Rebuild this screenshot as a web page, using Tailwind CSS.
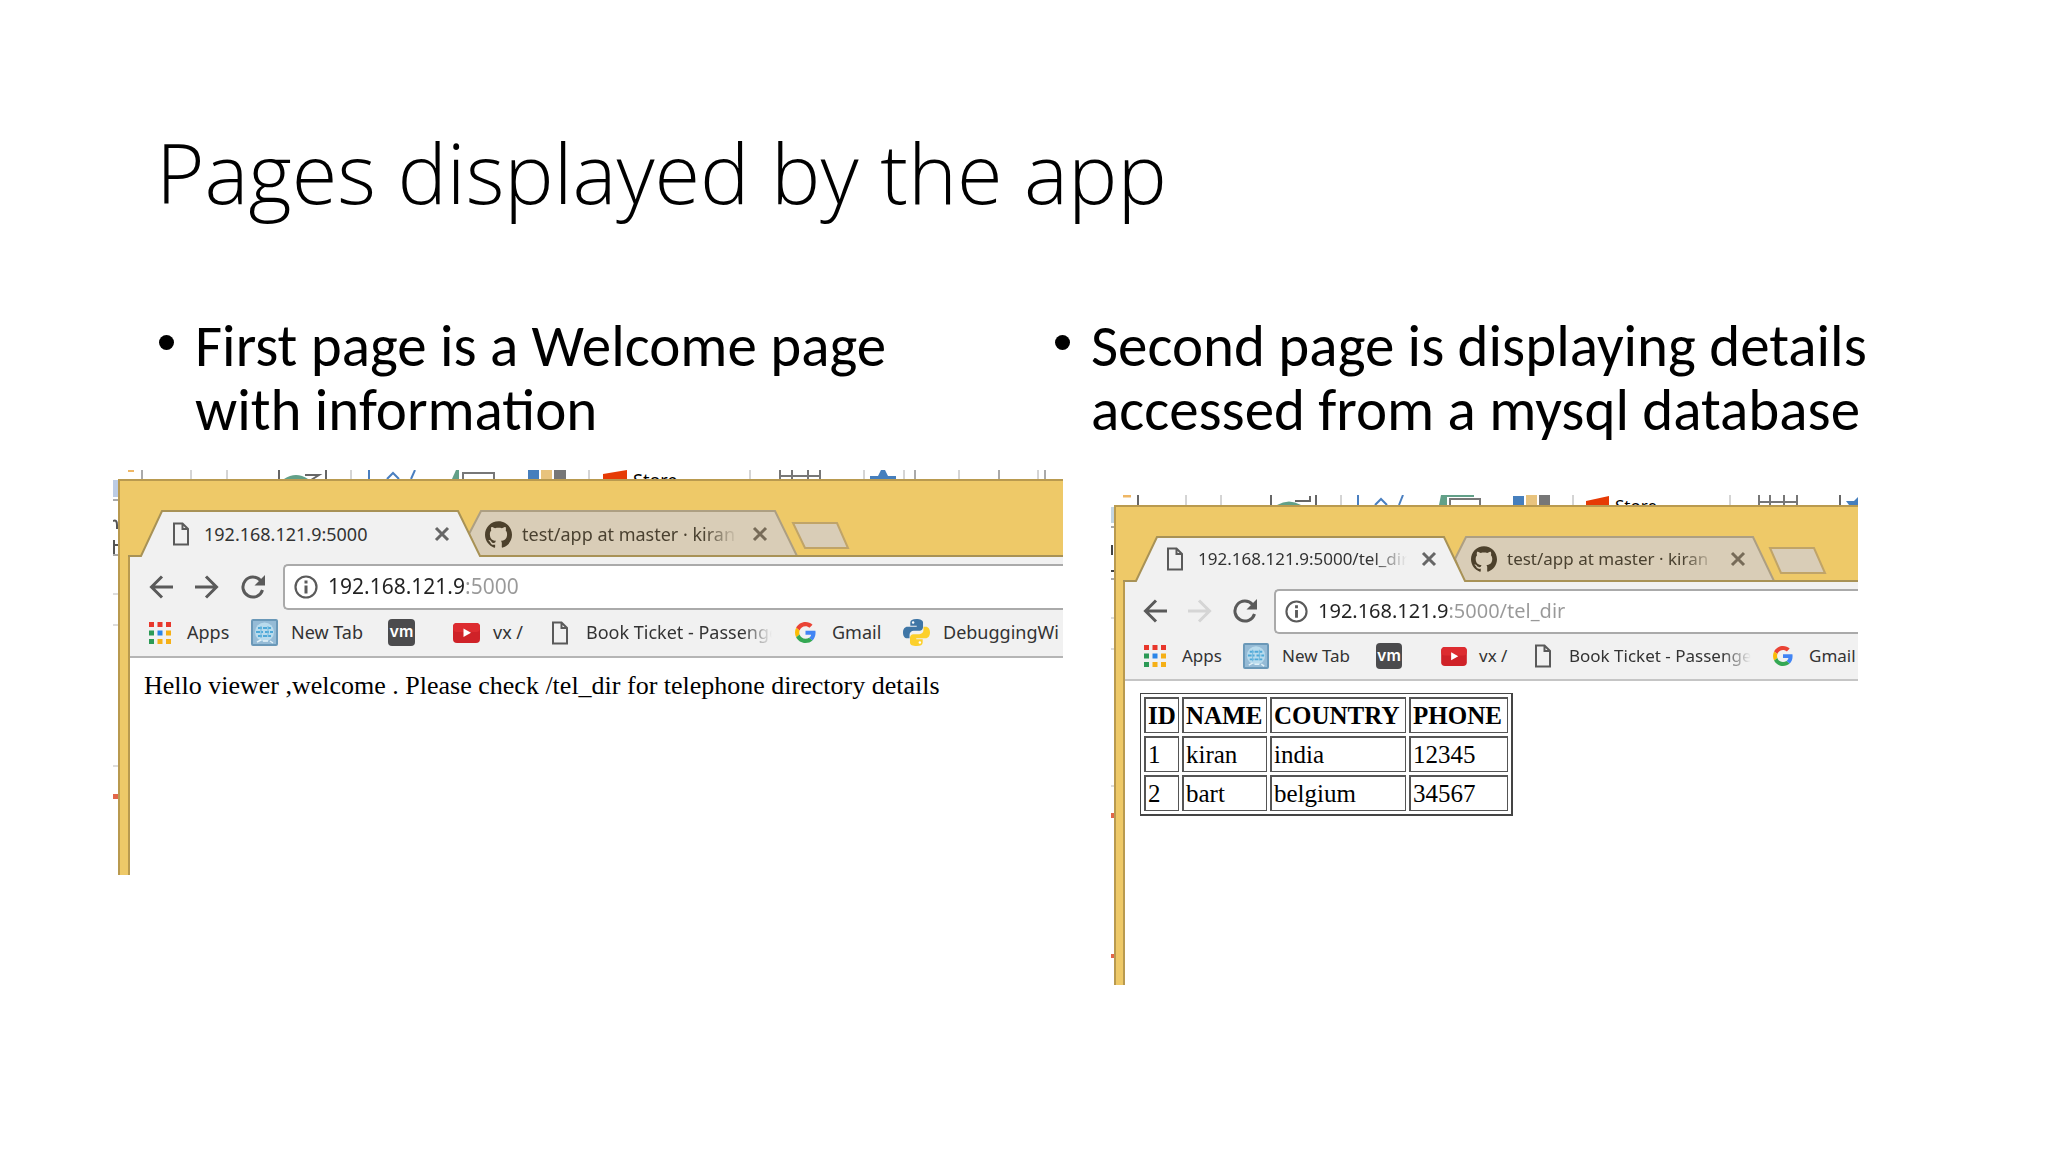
<!DOCTYPE html>
<html lang="en">
<head>
    <meta charset="UTF-8">
    <meta name="viewport" content="width=device-width, initial-scale=1.0">
    <title>Pages displayed by the app</title>
    <script src="https://cdn.jsdelivr.net/npm/@tailwindcss/browser@4"></script>
</head>
<body class="bg-white min-h-screen text-black font-['Carlito','Lato',sans-serif]">

    <!-- Shared icons -->
    <svg class="hidden" aria-hidden="true">
        <symbol id="page" viewBox="0 0 18 24">
            <path d="M2 1.500h8.500L16 7v15.500H2z M10.500 1.500V7H16" fill="none" stroke="#5a5a5a" stroke-width="2"/>
        </symbol>
        <symbol id="close" viewBox="0 0 16 16">
            <path d="M2 2l12 12M14 2L2 14" stroke="currentColor" stroke-width="3" fill="none"/>
        </symbol>
        <symbol id="back" viewBox="0 0 24 24">
            <path d="M13 1.500L2.500 12L13 22.500M2.500 12H24" fill="none" stroke="currentColor" stroke-width="3"/>
        </symbol>
        <symbol id="forward" viewBox="0 0 24 24">
            <path d="M11 1.500L21.500 12L11 22.500M21.500 12H0" fill="none" stroke="currentColor" stroke-width="3"/>
        </symbol>
        <symbol id="reload" viewBox="0 0 24 24">
            <path d="M19.500 5.500A10 10 0 1 0 21.500 15" fill="none" stroke="#5a5a5a" stroke-width="3"/>
            <path d="M24 0v10.500H13.500z" fill="#5a5a5a"/>
        </symbol>
        <symbol id="info" viewBox="0 0 24 24">
            <circle cx="12" cy="12" r="10.500" fill="none" stroke="#5a5a5a" stroke-width="2.200"/>
            <path d="M10.500 5.500h3v3h-3zM10.500 10.500h3v8h-3z" fill="#5a5a5a"/>
        </symbol>
        <symbol id="apps" viewBox="0 0 22 22">
            <path d="M0 0h5v5H0zM8.500 0h5v5h-5zM17 0h5v5h-5z" fill="#e8372c"/>
            <path d="M0 8.500h5v5H0zM0 17h5v5H0z" fill="#2c9a56"/>
            <path d="M8.500 8.500h5v5h-5z" fill="#2a85e8"/>
            <path d="M17 8.500h5v5h-5zM8.500 17h5v5h-5zM17 17h5v5h-5z" fill="#f5b017"/>
        </symbol>
        <symbol id="globe" viewBox="0 0 27 27">
            <rect x="1" y="1" width="25" height="25" rx="1" fill="#95bbd6" stroke="#6a98b8" stroke-width="2"/>
            <circle cx="13.500" cy="13" r="9.500" fill="#b9dbed"/>
            <path d="M7 9h13M5 13h7M14 13h8M7 17h13" stroke="#4fa9d8" stroke-width="2" stroke-dasharray="4 1" fill="none"/>
            <path d="M10 7v12M17 7v11" stroke="#6fb9df" stroke-width="1" fill="none"/>
            <path d="M6 23l4-2M12 22h5M19 22l3 2" stroke="#e2f1f8" stroke-width="1.500" fill="none"/>
        </symbol>
        <symbol id="youtube" viewBox="0 0 27 20">
            <rect width="27" height="20" rx="4" fill="#cf2228"/>
            <rect width="27" height="9" rx="4" fill="#dd2c30"/>
            <path d="M10.500 5.500v8.500l7.500-4.250z" fill="#fff"/>
        </symbol>
        <symbol id="github" viewBox="0 0 24 24">
            <path fill="#4d412c" d="M12 .297c-6.630 0-12 5.373-12 12 0 5.303 3.438 9.800 8.205 11.385.600.113.820-.258.820-.577 0-.285-.010-1.040-.015-2.040-3.338.724-4.042-1.610-4.042-1.610C4.422 18.070 3.633 17.700 3.633 17.700c-1.087-.744.084-.729.084-.729 1.205.084 1.838 1.236 1.838 1.236 1.070 1.835 2.809 1.305 3.495.998.108-.776.417-1.305.760-1.605-2.665-.300-5.466-1.332-5.466-5.930 0-1.310.465-2.380 1.235-3.220-.135-.303-.540-1.523.105-3.176 0 0 1.005-.322 3.300 1.230.960-.267 1.980-.399 3-.405 1.020.006 2.040.138 3 .405 2.280-1.552 3.285-1.230 3.285-1.230.645 1.653.240 2.873.120 3.176.765.840 1.230 1.910 1.230 3.220 0 4.610-2.805 5.625-5.475 5.920.420.360.810 1.096.810 2.220 0 1.606-.015 2.896-.015 3.286 0 .315.210.690.825.570C20.565 22.092 24 17.592 24 12.297c0-6.627-5.373-12-12-12"/>
        </symbol>
        <symbol id="google" viewBox="0 0 48 48">
            <path fill="#EA4335" d="M24 9.500c3.540 0 6.710 1.220 9.210 3.600l6.850-6.850C35.900 2.380 30.470 0 24 0 14.620 0 6.510 5.380 2.560 13.220l7.980 6.190C12.430 13.720 17.740 9.500 24 9.500z"/>
            <path fill="#4285F4" d="M46.980 24.550c0-1.570-.150-3.090-.380-4.550H24v9.020h12.940c-.580 2.960-2.260 5.480-4.780 7.180l7.730 6c4.510-4.180 7.090-10.360 7.090-17.650z"/>
            <path fill="#FBBC05" d="M10.530 28.590c-.480-1.450-.760-2.990-.760-4.590s.270-3.140.760-4.590l-7.980-6.190C.920 16.460 0 20.120 0 24c0 3.880.920 7.540 2.560 10.780l7.970-6.190z"/>
            <path fill="#34A853" d="M24 48c6.480 0 11.930-2.130 15.890-5.810l-7.730-6c-2.150 1.450-4.920 2.300-8.160 2.300-6.260 0-11.570-4.220-13.470-9.910l-7.980 6.190C6.510 42.620 14.620 48 24 48z"/>
        </symbol>
        <symbol id="python" viewBox="0 0 24 24">
            <path fill="#3f76a6" d="M11.900 0C8.400 0 6.500 1.200 6.500 3.200V6h5.700v.900H4C1.600 6.900 0 8.900 0 12s1.500 5.200 3.700 5.200h2.100v-3c0-2.100 1.700-3.700 3.700-3.700h5.300c1.700 0 3-1.400 3-3.100V3.200C17.800 1.200 15.500 0 11.900 0z"/>
            <circle cx="9" cy="3.200" r="1.100" fill="#fff"/>
            <path fill="#fcd02c" d="M12.100 24c3.500 0 5.400-1.200 5.400-3.200V18h-5.700v-.900H20c2.400 0 4-2 4-5.100s-1.500-5.200-3.700-5.200h-2.100v3c0 2.100-1.700 3.700-3.700 3.700H9.200c-1.700 0-3 1.400-3 3.100v4.200c0 2 2.300 3.200 5.900 3.200z"/>
            <circle cx="15" cy="20.800" r="1.100" fill="#fff"/>
        </symbol>
    </svg>

    <main class="pt-[124px]">
        <h1 class="pl-[156px] text-[83px] leading-[96px] font-light font-['Open_Sans',sans-serif]">Pages displayed by the app</h1>

        <div class="grid grid-cols-2 gap-[60px] pl-[159px] pr-[157px] mt-[94px] text-[59px] leading-[64px]">
            <ul>
                <li class="flex gap-[21px]">
                    <span class="mt-[21px] size-[15px] shrink-0 rounded-full bg-black"></span>
                    <span class="pr-8">First page is a Welcome page with information</span>
                </li>
            </ul>
            <ul>
                <li class="flex gap-[21px]">
                    <span class="mt-[21px] size-[15px] shrink-0 rounded-full bg-black"></span>
                    <span>Second page is displaying details accessed from a mysql database</span>
                </li>
            </ul>
        </div>

        <div class="grid grid-cols-[950fr_747fr] items-start gap-12 pl-[113px] pr-[190px] mt-[28px] font-['Noto_Sans',sans-serif]">

            <!-- Welcome page -->
            <section class="relative overflow-hidden">
                <svg class="absolute left-0 top-0 w-full h-full" aria-hidden="true">
                    <path d="M15 1h6" stroke="#efb765" stroke-width="2"/>
                    <path d="M29 0v9M802 0v9M886 0v9M932 0v9" stroke="#555" stroke-width="1"/>
                    <path d="M78 0v9M114 0v9M238 0v9M476 0v9M637 0v9M751 0v9M791 0v9M846 0v9M925 0v9" stroke="#aaa" stroke-width="1"/>
                    <path d="M171 9q12-8 24 0z" fill="#62a088"/>
                    <path d="M166 0v9M192 5h14l-8 5M213 0v9" stroke="#666" stroke-width="2" fill="none"/>
                    <path d="M256 0v9M274 9l6-6 6 6M302 0l-4 9" stroke="#4a7fc0" stroke-width="2" fill="none"/>
                    <path d="M346 0h-3l-4 9h7z" fill="#62a088"/>
                    <path d="M350 10V3h31v7" stroke="#777" stroke-width="2" fill="none"/>
                    <path d="M415 0h11v9h-11z" fill="#467fbd"/><path d="M428 0h11v9h-11z" fill="#e8c37d"/><path d="M441 0h12v9h-12z" fill="#777"/>
                    <path d="M490 9V4l24-4v9z" fill="#e63b05"/>
                    <path d="M667 0v9M679 0v9M695 0v9M707 0v9M667 6h40" stroke="#777" stroke-width="2"/>
                    <path d="M757 9v-3h8l3-6h4l3 6h8v3z" fill="#467fbd"/>
                    <path d="M0 10h5v17H0z" fill="#bccce5"/>
                    <path d="M0 30h5M0 85h5" stroke="#555" stroke-width="1"/>
                    <path d="M0 51q4-2 4 4v4M1 70v14M0 75h5" stroke="#555" stroke-width="2" fill="none"/>
                    <path d="M0 124h5M0 155h5M0 296h5" stroke="#bbb" stroke-width="1"/>
                    <path d="M0 324h5v5H0z" fill="#e2674a"/>
                </svg>
                <div class="relative h-[9px] overflow-hidden pl-[520px] text-[18px] leading-[20px] text-black">Store</div>
                <div class="relative ml-[5px] border-t-2 border-l-2 border-[#b99a4f] bg-[#eec968] pl-[8px]">
                    <div class="-ml-[10px] relative h-[76px] pt-[30px]">
                        <!-- Tab shapes -->
                        <svg class="absolute left-0 top-0 h-full w-full" aria-hidden="true">
                            <path d="M351 53L363 30H657L679 75H361z" fill="#d9cdb7" stroke="#ad9f82" stroke-width="2"/>
                            <path d="M10 78V75H23L44 30H340L362 75V78z" fill="#f1f1f1"/>
                            <path d="M10 75H23L44 30H340L362 75H2000" fill="none" stroke="#a89256" stroke-width="2"/>
                            <path d="M675 42H719L730 67H687z" fill="#d9cdb7" stroke="#c0a468" stroke-width="2"/>
                        </svg>
                        <div class="relative flex h-[46px] items-center text-[18px] leading-[24px]">
                            <div class="ml-[54px] flex w-[313px] shrink-0 items-center text-[#333]">
                                <svg class="h-6 w-[18px]"><use href="#page"/></svg>
                                <span class="ml-[14px] w-[230px]">192.168.121.9:5000</span>
                                <button aria-label="Close tab" class="text-[#666]"><svg class="size-4"><use href="#close"/></svg></button>
                            </div>
                            <div class="flex shrink-0 items-center text-[#4a4130]">
                                <svg class="size-[27px]"><use href="#github"/></svg>
                                <span class="ml-[10px] w-[216px] overflow-hidden whitespace-nowrap mask-[linear-gradient(90deg,#000_84%,transparent)]">test/app at master · kiran</span>
                                <button aria-label="Close tab" class="ml-[14px] text-[#776b58]"><svg class="size-4"><use href="#close"/></svg></button>
                            </div>
                            <button aria-label="New tab" class="ml-[25px] h-[25px] w-[54px] shrink-0"></button>
                        </div>
                    </div>
                    <div class="border-l-2 border-[#b99a4f] bg-[#f1f1f1]">
                        <div class="flex h-[54px] items-center pl-[19px] pt-[5px] text-[#5a5a5a]">
                            <button aria-label="Back" class="mr-[22px]"><svg class="size-6"><use href="#back"/></svg></button>
                            <button aria-label="Forward" class="mr-[22px]"><svg class="size-6"><use href="#forward"/></svg></button>
                            <button aria-label="Reload" class="mr-[18px]"><svg class="size-6"><use href="#reload"/></svg></button>
                            <div class="flex h-[46px] grow items-center rounded-l-[5px] border-2 border-r-0 border-[#aaa] bg-white pl-[9px]">
                                <svg class="size-6 shrink-0"><use href="#info"/></svg>
                                <input type="text" aria-label="Address" value="192.168.121.9:5000" class="ml-[10px] grow bg-[linear-gradient(90deg,#222_137px,#999_137px)] bg-clip-text text-[21px] text-transparent outline-none">
                            </div>
                        </div>
                        <nav class="flex h-[47px] items-center overflow-hidden whitespace-nowrap border-b-2 border-[#b5b5b5] pb-[2px] pl-[19px] text-[18px] text-[#333]">
                            <a href="#" class="flex w-[102px] shrink-0 items-center gap-[16px]"><svg class="size-[22px]"><use href="#apps"/></svg>Apps</a>
                            <a href="#" class="flex w-[137px] shrink-0 items-center gap-[13px]"><svg class="size-[27px]"><use href="#globe"/></svg>New Tab</a>
                            <a href="#" class="w-[65px] shrink-0"><span class="flex size-[27px] items-center justify-center rounded-[4px] bg-[#4b4b4d] pb-[3px] font-['Inter',sans-serif] text-[16px] leading-none font-semibold text-white">vm</span></a>
                            <a href="#" class="flex w-[98px] shrink-0 items-center gap-[13px]"><svg class="h-[20px] w-[27px]"><use href="#youtube"/></svg>vx /</a>
                            <a href="#" class="flex w-[244px] shrink-0 items-center gap-[17px]"><svg class="h-6 w-[18px] shrink-0"><use href="#page"/></svg><span class="w-[186px] overflow-hidden mask-[linear-gradient(90deg,#000_84%,transparent)]">Book Ticket - Passenger</span></a>
                            <a href="#" class="flex w-[108px] shrink-0 items-center gap-[16px]"><svg class="size-[21px]"><use href="#google"/></svg>Gmail</a>
                            <a href="#" class="flex shrink-0 items-center gap-[13px]"><svg class="size-[27px]"><use href="#python"/></svg>DebuggingWi</a>
                        </nav>
                        <div class="h-[217px] bg-white pl-[14px] pt-[13px] font-['Liberation_Serif',serif] text-[26px] leading-[30px] whitespace-nowrap">
                            Hello viewer ,welcome . Please check /tel_dir for telephone directory details
                        </div>
                    </div>
                </div>
            </section>

            <!-- Telephone directory page -->
            <section class="relative mt-[25px] overflow-hidden">
                <svg class="absolute left-0 top-0 w-full h-full" aria-hidden="true">
                    <path d="M12 1h8" stroke="#efb765" stroke-width="3"/>
                    <path d="M27 0v10M729 0v10" stroke="#666" stroke-width="2"/>
                    <path d="M75 0v10M110 0v10M230 0v10M462 0v10M619 0v10" stroke="#aaa" stroke-width="1"/>
                    <path d="M166 10q12-7 24 0z" fill="#62a088"/>
                    <path d="M160 0v10M184 6h15V1M205 0v10" stroke="#666" stroke-width="2" fill="none"/>
                    <path d="M247 0v10M264 10l6-6 6 6M292 0l-4 10" stroke="#4a7fc0" stroke-width="2" fill="none"/>
                    <path d="M363 0h-33l-2 10h8V2h27z" fill="#62a088"/>
                    <path d="M339 11V4h30v7" stroke="#777" stroke-width="2" fill="none"/>
                    <path d="M402 1h11v9h-11z" fill="#467fbd"/><path d="M415 0h11v10h-11z" fill="#e8c37d"/><path d="M428 0h11v10h-11z" fill="#777"/>
                    <path d="M475 10V6l23-5v9z" fill="#e63b05"/>
                    <path d="M648 0v10M659 0v10M673 0v10M686 0v10M648 7h38" stroke="#777" stroke-width="2"/>
                    <path d="M735 6h8l4-4v8h-9z" fill="#467fbd"/>
                    <path d="M0 12h4v16H0z" fill="#c3d5e3"/>
                    <path d="M0 32h4M0 84h4" stroke="#555" stroke-width="1"/>
                    <path d="M1 50v10M0 76h3" stroke="#444" stroke-width="2"/>
                    <path d="M0 123h4M0 154h4M0 291h4" stroke="#bbb" stroke-width="1"/>
                    <path d="M0 318h4v5H0zM0 459h4v4H0z" fill="#e2674a"/>
                </svg>
                <div class="relative h-[10px] overflow-hidden pl-[504px] text-[17px] leading-[22px] text-black">Store</div>
                <div class="relative ml-[3px] border-t-2 border-l-2 border-[#b99a4f] bg-[#eec968] pl-[7px]">
                    <div class="-ml-[9px] relative h-[75px] pt-[29px]">
                        <!-- Tab shapes -->
                        <svg class="absolute left-0 top-0 h-full w-full" aria-hidden="true">
                            <path d="M341 52L352 30H639L660 74H350z" fill="#d9cdb7" stroke="#ad9f82" stroke-width="2"/>
                            <path d="M9 77V74H22L43 30H330L351 74V77z" fill="#f1f1f1"/>
                            <path d="M9 74H22L43 30H330L351 74H2000" fill="none" stroke="#a89256" stroke-width="2"/>
                            <path d="M656 41H700L711 66H667z" fill="#d9cdb7" stroke="#c0a468" stroke-width="2"/>
                        </svg>
                        <div class="relative flex h-[46px] items-center text-[17px] leading-[24px]">
                            <div class="ml-[52px] flex w-[305px] shrink-0 items-center text-[#333]">
                                <svg class="h-6 w-[18px]"><use href="#page"/></svg>
                                <span class="ml-[14px] w-[209px] overflow-hidden whitespace-nowrap mask-[linear-gradient(90deg,#000_84%,transparent)]">192.168.121.9:5000/tel_dir</span>
                                <button aria-label="Close tab" class="ml-[14px] text-[#666]"><svg class="size-4"><use href="#close"/></svg></button>
                            </div>
                            <div class="flex shrink-0 items-center text-[#4a4130]">
                                <svg class="size-[26px]"><use href="#github"/></svg>
                                <span class="ml-[10px] w-[209px] overflow-hidden whitespace-nowrap mask-[linear-gradient(90deg,#000_84%,transparent)]">test/app at master · kiran</span>
                                <button aria-label="Close tab" class="ml-[14px] text-[#776b58]"><svg class="size-4"><use href="#close"/></svg></button>
                            </div>
                            <button aria-label="New tab" class="ml-[24px] h-[25px] w-[54px] shrink-0"></button>
                        </div>
                    </div>
                    <div class="border-l-2 border-[#b99a4f] bg-[#f1f1f1]">
                        <div class="flex h-[53px] items-center pl-[18px] pt-[5px] text-[#5a5a5a]">
                            <button aria-label="Back" class="mr-[21px]"><svg class="size-6"><use href="#back"/></svg></button>
                            <button aria-label="Forward" disabled class="mr-[21px] text-[#d5d5d5]"><svg class="size-6"><use href="#forward"/></svg></button>
                            <button aria-label="Reload" class="mr-[17px]"><svg class="size-6"><use href="#reload"/></svg></button>
                            <div class="flex h-[45px] grow items-center rounded-l-[5px] border-2 border-r-0 border-[#aaa] bg-white pl-[9px]">
                                <svg class="size-[23px] shrink-0"><use href="#info"/></svg>
                                <input type="text" aria-label="Address" value="192.168.121.9:5000/tel_dir" class="ml-[10px] grow bg-[linear-gradient(90deg,#222_131px,#999_131px)] bg-clip-text text-[20px] text-transparent outline-none">
                            </div>
                        </div>
                        <nav class="flex h-[46px] items-center overflow-hidden whitespace-nowrap border-b-2 border-[#c5c5c5] pb-[2px] pl-[19px] text-[17px] text-[#333]">
                            <a href="#" class="flex w-[99px] shrink-0 items-center gap-[16px]"><svg class="size-[22px]"><use href="#apps"/></svg>Apps</a>
                            <a href="#" class="flex w-[133px] shrink-0 items-center gap-[13px]"><svg class="size-[26px]"><use href="#globe"/></svg>New Tab</a>
                            <a href="#" class="w-[65px] shrink-0"><span class="flex size-[26px] items-center justify-center rounded-[4px] bg-[#4b4b4d] pb-[3px] font-['Inter',sans-serif] text-[16px] leading-none font-semibold text-white">vm</span></a>
                            <a href="#" class="flex w-[93px] shrink-0 items-center gap-[12px]"><svg class="h-[19px] w-[26px]"><use href="#youtube"/></svg>vx /</a>
                            <a href="#" class="flex w-[239px] shrink-0 items-center gap-[17px]"><svg class="h-6 w-[18px] shrink-0"><use href="#page"/></svg><span class="w-[182px] overflow-hidden mask-[linear-gradient(90deg,#000_84%,transparent)]">Book Ticket - Passenger</span></a>
                            <a href="#" class="flex shrink-0 items-center gap-[16px]"><svg class="size-[20px]"><use href="#google"/></svg>Gmail</a>
                        </nav>
                        <div class="h-[304px] bg-white pl-[15px] pt-[12px] font-['Liberation_Serif',serif] text-[25px] leading-[31px]">
                            <table class="w-[373px] table-fixed border-separate border-spacing-[3px] border border-r-2 border-b-2 border-[#444] text-left [&_td]:border [&_td]:border-t-2 [&_td]:border-l-2 [&_td]:border-[#555] [&_td]:px-[2px] [&_td]:py-px [&_th]:border [&_th]:border-t-2 [&_th]:border-l-2 [&_th]:border-[#555] [&_th]:px-[2px] [&_th]:py-px">
                                <tr><th class="w-[35px]">ID</th><th class="w-[85px]">NAME</th><th class="w-[136px]">COUNTRY</th><th>PHONE</th></tr>
                                <tr><td>1</td><td>kiran</td><td>india</td><td>12345</td></tr>
                                <tr><td>2</td><td>bart</td><td>belgium</td><td>34567</td></tr>
                            </table>
                        </div>
                    </div>
                </div>
            </section>
        </div>
    </main>
</body>
</html>
